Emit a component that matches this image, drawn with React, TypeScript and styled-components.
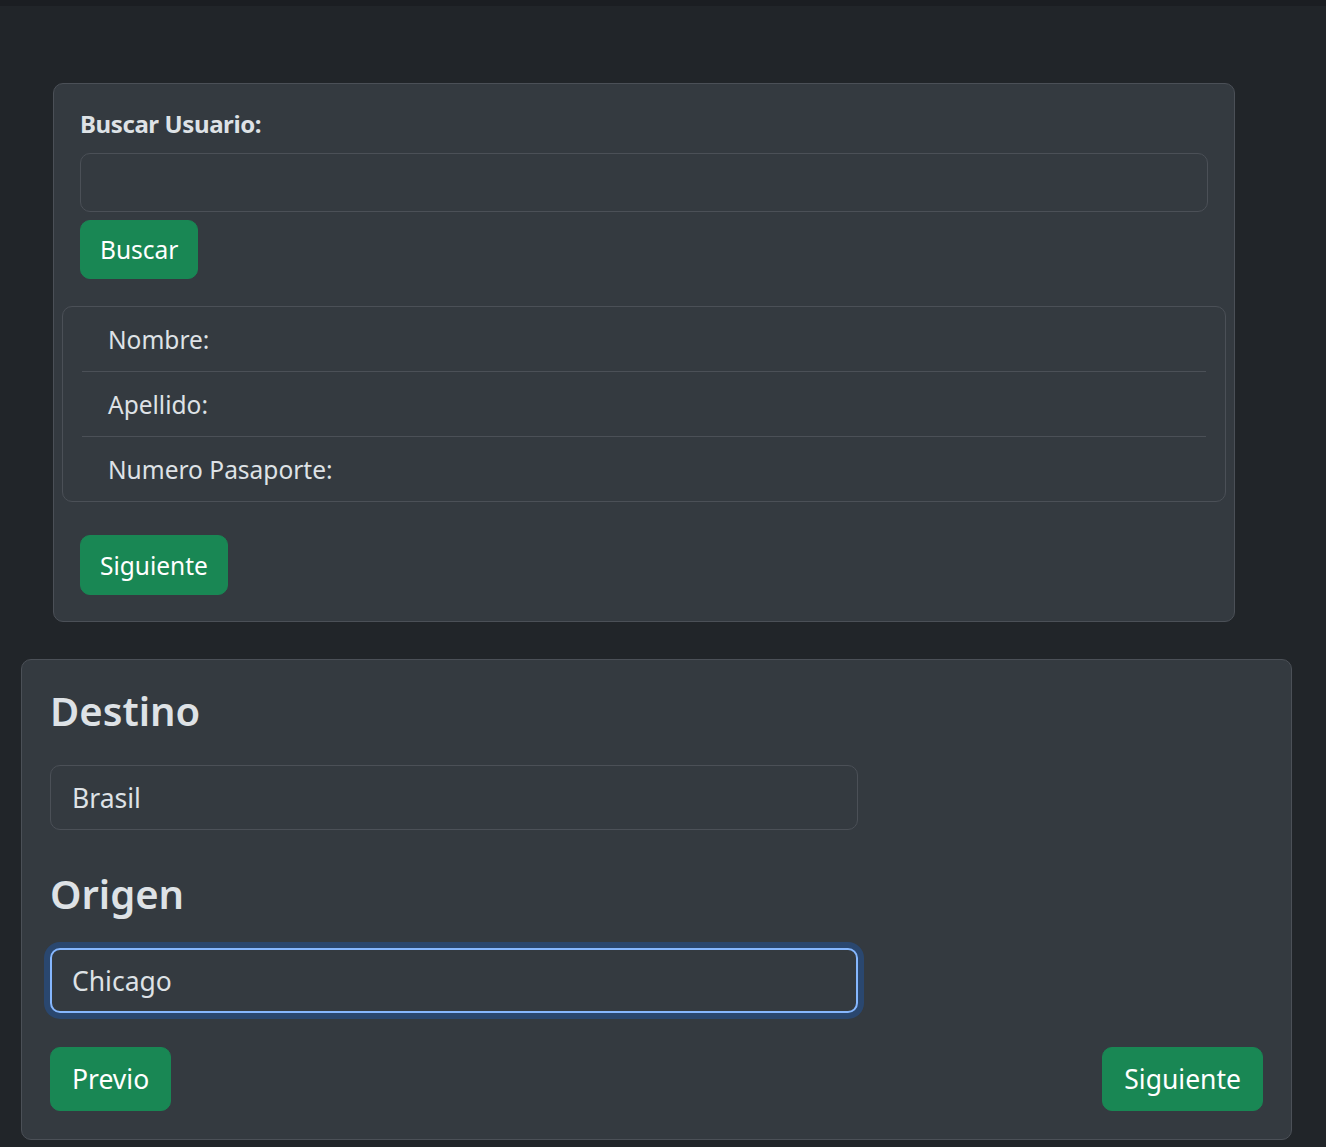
import React from "react";
import styled, { createGlobalStyle } from "styled-components";

const GlobalStyle = createGlobalStyle`
  html, body {
    margin: 0;
    padding: 0;
    background: #212529;
  }
  body {
    font-family: "Noto Sans", "DejaVu Sans", sans-serif;
    color: #dee2e6;
  }
  * { box-sizing: border-box; }
`;

const TopBar = styled.div`
  height: 6px;
  background: #1b1e22;
`;

const Page = styled.main`
  display: flex;
  flex-direction: column;
  align-items: flex-start;
  padding-top: 77px;
  padding-bottom: 6px;
`;

const Card = styled.section<{ $left: number; $width: number; $top?: number; $pad: string }>`
  margin-left: ${(p) => p.$left}px;
  margin-top: ${(p) => p.$top ?? 0}px;
  width: ${(p) => p.$width}px;
  padding: ${(p) => p.$pad};
  background: #343a40;
  border: 1px solid #4b5057;
  border-radius: 10px;
  display: flex;
  flex-direction: column;
`;

const Inset = styled.div`
  margin: 0 18px;
  display: flex;
  flex-direction: column;
  align-items: flex-start;
`;

const Label = styled.label`
  display: block;
  font-size: 24px;
  font-weight: 700;
  letter-spacing: -0.4px;
  line-height: 39px;
  margin-bottom: 10px;
`;

const Input = styled.input<{ $h: number; $fs: number; $focused?: boolean }>`
  display: block;
  width: 100%;
  height: ${(p) => p.$h}px;
  font-family: inherit;
  font-size: ${(p) => p.$fs}px;
  color: #dee2e6;
  background: #343a40;
  border: ${(p) => (p.$focused ? "2px solid #86b7fe" : "1px solid #4b5057")};
  padding: 0 21px 0 ${(p) => (p.$focused ? 20 : 21)}px;
  border-radius: 10px;
  outline: none;
  box-shadow: ${(p) => (p.$focused ? "0 0 0 6px rgba(13, 110, 253, 0.25)" : "none")};
`;

const Button = styled.button<{ $h: number; $fs: number; $px: number; $top?: number }>`
  height: ${(p) => p.$h}px;
  margin-top: ${(p) => p.$top ?? 0}px;
  padding: 0 ${(p) => p.$px}px;
  font-family: inherit;
  font-size: ${(p) => p.$fs}px;
  color: #ffffff;
  background: #198754;
  border: 1px solid #198754;
  border-radius: 10px;
  cursor: pointer;
`;

const ListGroup = styled.ul`
  list-style: none;
  margin: 27px 0 0;
  padding: 0;
  border: 1px solid #4b5057;
  border-radius: 10px;
`;

const ListItem = styled.li`
  height: 65px;
  margin: 0 19px;
  padding: 0 26px;
  display: flex;
  align-items: center;
  font-size: 24.5px;
  border-bottom: 1px solid #4b5057;
  &:last-child {
    height: 64px;
    border-bottom: none;
  }
`;

const Heading = styled.h4<{ $top?: number }>`
  margin: ${(p) => p.$top ?? 0}px 0 32px;
  font-size: 40px;
  font-weight: 600;
  line-height: 44px;
`;

const FieldCol = styled.div`
  width: 808px;
`;

const ButtonRow = styled.div`
  margin-top: 34px;
  display: flex;
  justify-content: space-between;
  align-items: center;
`;

export default function App() {
  return (
    <>
      <GlobalStyle />
      <TopBar />
      <Page>
        <Card $left={53} $width={1182} $pad="20px 8px 26px">
          <Inset>
            <Label htmlFor="buscar">Buscar Usuario:</Label>
            <Input id="buscar" $h={59} $fs={24.5} defaultValue="" />
            <Button $h={59} $fs={24.5} $px={19} $top={8}>
              Buscar
            </Button>
          </Inset>
          <ListGroup>
            <ListItem>Nombre:</ListItem>
            <ListItem>Apellido:</ListItem>
            <ListItem>Numero Pasaporte:</ListItem>
          </ListGroup>
          <Inset>
            <Button $h={60} $fs={24.5} $px={19} $top={33}>
              Siguiente
            </Button>
          </Inset>
        </Card>

        <Card $left={21} $width={1271} $top={37} $pad="29px 28px 28px">
          <Heading>Destino</Heading>
          <FieldCol>
            <Input $h={65} $fs={26.5} defaultValue="Brasil" />
          </FieldCol>
          <Heading $top={42}>Origen</Heading>
          <FieldCol>
            <Input $h={65} $fs={26.5} $focused defaultValue="Chicago" />
          </FieldCol>
          <ButtonRow>
            <Button $h={64} $fs={26.5} $px={21}>
              Previo
            </Button>
            <Button $h={64} $fs={26.5} $px={21}>
              Siguiente
            </Button>
          </ButtonRow>
        </Card>
      </Page>
    </>
  );
}
